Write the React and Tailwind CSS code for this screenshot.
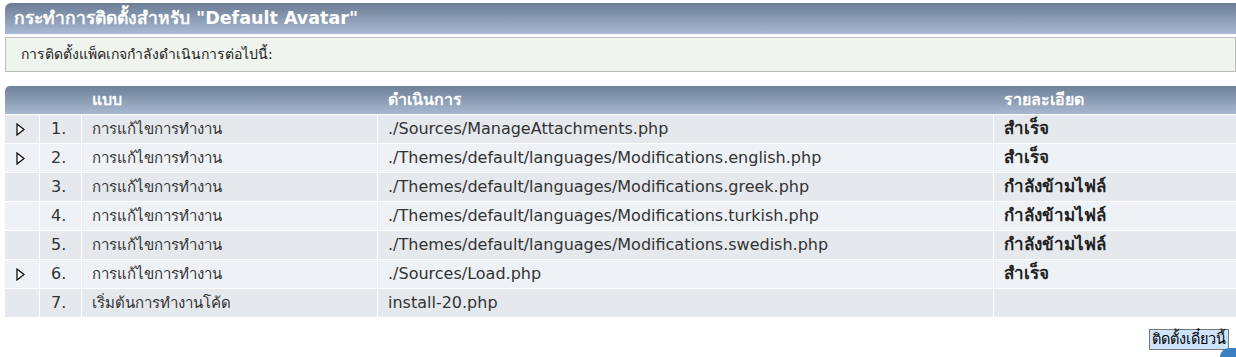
const rows = [
  { n: '1.', type: 'การแก้ไขการทำงาน', action: './Sources/ManageAttachments.php', detail: 'สำเร็จ', arrow: true },
  { n: '2.', type: 'การแก้ไขการทำงาน', action: './Themes/default/languages/Modifications.english.php', detail: 'สำเร็จ', arrow: true },
  { n: '3.', type: 'การแก้ไขการทำงาน', action: './Themes/default/languages/Modifications.greek.php', detail: 'กำลังข้ามไฟล์', arrow: false },
  { n: '4.', type: 'การแก้ไขการทำงาน', action: './Themes/default/languages/Modifications.turkish.php', detail: 'กำลังข้ามไฟล์', arrow: false },
  { n: '5.', type: 'การแก้ไขการทำงาน', action: './Themes/default/languages/Modifications.swedish.php', detail: 'กำลังข้ามไฟล์', arrow: false },
  { n: '6.', type: 'การแก้ไขการทำงาน', action: './Sources/Load.php', detail: 'สำเร็จ', arrow: true },
  { n: '7.', type: 'เริ่มต้นการทำงานโค้ด', action: 'install-20.php', detail: '', arrow: false },
];

const Arrow = () => (
  <svg width="9" height="13" viewBox="0 0 9 13" className="block">
    <path d="M1 1 L8 6.5 L1 12 Z" fill="white" stroke="black" strokeWidth="1.2" strokeLinejoin="miter" />
  </svg>
);

export default function App() {
  return (
    <div className="relative w-[1236px] h-[357px] overflow-hidden bg-white pl-[5px] pt-[3px] font-['DejaVu_Sans',Verdana,sans-serif] text-[#333]">
      <div className="h-[31px] rounded-tl-[6px] bg-gradient-to-b from-[#6b7d94] to-[#a9bad2] flex items-center pl-[9px] pt-[1px]">
        <h3 className="text-white font-bold text-[17.5px] leading-none">กระทำการติดตั้งสำหรับ "Default Avatar"</h3>
      </div>
      <div className="mt-[3px] h-[35px] border border-[#bdbdbd] bg-[#f0f4ee] flex items-center pl-[15px] text-[14px] text-[#222]">
        การติดตั้งแพ็คเกจกำลังดำเนินการต่อไปนี้:
      </div>

      <div className="mt-[14px] grid grid-cols-[34px_41px_295px_615px_1fr] gap-px bg-white text-[16px]">
        <div className="col-span-5 grid grid-cols-[34px_41px_295px_615px_1fr] gap-px h-[28px] rounded-tl-[5px] bg-gradient-to-b from-[#6f8199] to-[#a7b8cf] items-center font-bold text-white text-[16px]">
          <div />
          <div />
          <div className="pl-[10px]">แบบ</div>
          <div className="pl-[10px]">ดำเนินการ</div>
          <div className="pl-[10px]">รายละเอียด</div>
        </div>
        {rows.map((r, i) => {
          const bg = i % 2 === 0 ? 'bg-[#e5e8ed]' : 'bg-[#eef1f5]';
          return (
            <div key={r.n} className="contents">
              <div className={`${bg} h-[28px] flex items-center justify-center pr-[3px]`}>{r.arrow && <Arrow />}</div>
              <div className={`${bg} h-[28px] flex items-center pl-[11px]`}>{r.n}</div>
              <div className={`${bg} h-[28px] flex items-center pl-[10px] text-[15px]`}>{r.type}</div>
              <div className={`${bg} h-[28px] flex items-center pl-[10px]`}>{r.action}</div>
              <div className={`${bg} h-[28px] flex items-center pl-[10px] font-bold text-[17px] text-[#222]`}>{r.detail}</div>
            </div>
          );
        })}
      </div>

      <div className="flex justify-end pr-[7px] mt-[12px]">
        <button className="h-[21px] px-[2px] border border-[#777] bg-[#cde4fb] text-[14.5px] leading-none text-black">ติดตั้งเดี๋ยวนี้</button>
      </div>

      <div className="absolute right-0 bottom-0 w-[16px] h-[9px] rounded-tl-[16px] bg-[#3b7fc2]" />
    </div>
  );
}
